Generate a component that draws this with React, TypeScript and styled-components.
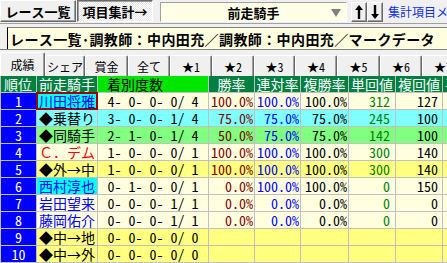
import React from "react";
import styled, { createGlobalStyle } from "styled-components";

const FONT = `"Noto Sans Mono CJK JP", "Noto Sans CJK JP", monospace`;

const GlobalStyle = createGlobalStyle`
  html, body { margin: 0; padding: 0; background: #f0f0f0; overflow: hidden; }
  body { font-family: ${FONT}; }
`;

const Window = styled.div`
  width: 447px;
  height: 263px;
  overflow: hidden;
  display: flex;
  flex-direction: column;
  background: #f0f0f0;
  font-family: ${FONT};
  color: #000;
`;

const Toolbar = styled.div`
  display: flex;
  align-items: flex-start;
  height: 23px;
  border-bottom: 1px solid #a0a0a0;
  white-space: nowrap;
`;

const ToolButton = styled.div<{ $pressed?: boolean }>`
  box-sizing: border-box;
  flex: none;
  width: 76px;
  height: 22px;
  margin-right: 1px;
  display: flex;
  align-items: center;
  justify-content: center;
  font-weight: bold;
  font-size: 13px;
  background: ${(p) =>
    p.$pressed
      ? "repeating-conic-gradient(#ffffff 0 25%, #e6e6e6 0 50%) 0 0 / 2px 2px"
      : "#f0f0f0"};
  border: 1px solid;
  border-color: ${(p) =>
    p.$pressed ? "#696969 #ffffff #ffffff #696969" : "#ffffff #696969 #696969 #ffffff"};
  box-shadow: ${(p) =>
    p.$pressed ? "inset 1px 1px 0 #a0a0a0" : "inset -1px -1px 0 #a0a0a0"};
`;

const Select = styled.div`
  box-sizing: border-box;
  flex: none;
  margin: 2px 0 0 6px;
  width: 187px;
  height: 20px;
  padding-left: 20px;
  display: grid;
  grid-template-columns: 1fr 20px;
  align-items: center;
  background: #ffffe8;
  border: 1px solid;
  border-color: #a0a0a0 #ffffff #ffffff #a0a0a0;
  font-weight: bold;
  font-size: 13px;
`;

const SelectText = styled.span`
  text-align: center;
`;

const SelectArrow = styled.span`
  justify-self: center;
  width: 0;
  height: 0;
  border-left: 5px solid transparent;
  border-right: 5px solid transparent;
  border-top: 8px solid #808080;
`;

const ArrowButton = styled.div<{ $first?: boolean }>`
  box-sizing: border-box;
  flex: none;
  width: 16px;
  height: 20px;
  margin: 2px 0 0 ${(p) => (p.$first ? 4 : 0)}px;
  display: flex;
  align-items: center;
  justify-content: center;
  border: 1px solid;
  border-color: #ffffff #696969 #696969 #ffffff;
  box-shadow: inset -1px -1px 0 #a0a0a0;
  background: #f0f0f0;
`;

const ArrowGlyph = styled.svg`
  display: block;
`;

const LinkText = styled.span`
  margin: 4px 0 0 5px;
  font-size: 12px;
  line-height: 16px;
  color: #1030e0;
`;

const TitleRow = styled.div`
  padding: 3px 0 0 7px;
  border-bottom: 1px solid #808080;
`;

const TitleBox = styled.div`
  box-sizing: border-box;
  height: 22px;
  padding-left: 2px;
  display: flex;
  align-items: center;
  background: #ffffe0;
  border-top: 1px solid #808080;
  border-left: 1px solid #000;
  font-weight: bold;
  font-size: 14px;
  letter-spacing: 0.4px;
  white-space: nowrap;
  overflow: hidden;
`;

const TabStrip = styled.div`
  display: flex;
  align-items: flex-end;
  height: 26px;
  white-space: nowrap;
`;

const Tab = styled.div<{ $active?: boolean; $w: number }>`
  box-sizing: border-box;
  flex: none;
  width: ${(p) => p.$w}px;
  height: ${(p) => (p.$active ? 24 : 21)}px;
  display: flex;
  align-items: center;
  justify-content: center;
  font-size: 12px;
  background: #f0f0f0;
  border-left: 1px solid #ffffff;
  border-top: 1px solid #ffffff;
  border-right: 1px solid #696969;
  border-radius: 2px 2px 0 0;
  box-shadow: inset -1px 0 0 #a0a0a0;
`;

const Grid = styled.div`
  display: grid;
  grid-template-columns: 35px 60px 110px 45px 45px 47px 46px 46px 80px;
  grid-auto-rows: 16px;
  gap: 1px;
  width: max-content;
  padding: 0 0 1px 1px;
  background: #c0c0c0;
  font-size: 14px;
  line-height: 16px;
`;

type Align = "left" | "center" | "right";

const Cell = styled.div<{
  $bg: string;
  $color?: string;
  $align?: Align;
  $pl?: number;
  $pr?: number;
  $selected?: boolean;
}>`
  background: ${(p) => p.$bg};
  color: ${(p) => p.$color ?? "#000"};
  text-align: ${(p) => p.$align ?? "left"};
  padding-left: ${(p) => p.$pl ?? 0}px;
  padding-right: ${(p) => p.$pr ?? 0}px;
  white-space: pre;
  overflow: hidden;
  box-shadow: ${(p) => (p.$selected ? "0 0 0 1px #a00000, inset 0 0 0 1px #a00000" : "none")};
  position: relative;
  z-index: ${(p) => (p.$selected ? 1 : 0)};
`;

const HEAD_BG = "#008040";
const SORT_BG = "#00e600";

const headers: { label: string; bg: string; color: string; align: Align; pl?: number }[] = [
  { label: "順位", bg: HEAD_BG, color: "#fff", align: "left", pl: 3 },
  { label: "前走騎手", bg: HEAD_BG, color: "#fff", align: "left", pl: 2 },
  { label: "着別度数", bg: SORT_BG, color: "#000", align: "left", pl: 9 },
  { label: "勝率", bg: HEAD_BG, color: "#fff", align: "center" },
  { label: "連対率", bg: HEAD_BG, color: "#fff", align: "center" },
  { label: "複勝率", bg: HEAD_BG, color: "#fff", align: "center" },
  { label: "単回値", bg: HEAD_BG, color: "#fff", align: "center" },
  { label: "複回値", bg: HEAD_BG, color: "#fff", align: "center" },
  { label: "平均人気", bg: HEAD_BG, color: "#fff", align: "left", pl: 2 },
];

type Row = {
  name: string;
  nameColor: string;
  nameBg?: string;
  selected?: boolean;
  rec: string;
  bg: string;
  vals?: [string, string, string, string, string];
};

const LY = "#ffffe0";
const YE = "#ffff80";

const rows: Row[] = [
  { name: "川田将雅", nameColor: "#0000ff", nameBg: "#00ffff", selected: true, rec: "4- 0- 0- 0/ 4", bg: LY, vals: ["100.0%", "100.0%", "100.0%", "312", "127"] },
  { name: "◆乗替り", nameColor: "#000", rec: "3- 0- 0- 1/ 4", bg: "#80ffff", vals: ["75.0%", "75.0%", "75.0%", "245", "100"] },
  { name: "◆同騎手", nameColor: "#000", rec: "2- 1- 0- 1/ 4", bg: "#80ff80", vals: ["50.0%", "75.0%", "75.0%", "142", "100"] },
  { name: "Ｃ．デム", nameColor: "#ff0000", rec: "1- 0- 0- 0/ 1", bg: LY, vals: ["100.0%", "100.0%", "100.0%", "300", "140"] },
  { name: "◆外→中", nameColor: "#000", rec: "1- 0- 0- 0/ 1", bg: YE, vals: ["100.0%", "100.0%", "100.0%", "300", "140"] },
  { name: "西村淳也", nameColor: "#0000ff", nameBg: "#00ffff", rec: "0- 1- 0- 0/ 1", bg: LY, vals: ["0.0%", "100.0%", "100.0%", "0", "150"] },
  { name: "岩田望来", nameColor: "#0000ff", rec: "0- 0- 0- 1/ 1", bg: LY, vals: ["0.0%", "0.0%", "0.0%", "0", "0"] },
  { name: "藤岡佑介", nameColor: "#0000ff", rec: "0- 0- 0- 1/ 1", bg: LY, vals: ["0.0%", "0.0%", "0.0%", "0", "0"] },
  { name: "◆中→地", nameColor: "#000", rec: "0- 0- 0- 0/ 0", bg: YE },
  { name: "◆中→外", nameColor: "#000", rec: "0- 0- 0- 0/ 0", bg: YE },
];

const valueColors = ["#800000", "#0000ff", "#000", "#008000", "#000"];
const valuePad = [1, 1, 1, 5, 4];

const tabs = ["成績", "シェア", "賞金", "全て", "★1", "★2", "★3", "★4", "★5", "★6", "★7"];
const tabWidths = [45, 40, 43, 42, 42, 42, 41, 42, 43, 42, 42];

function Arrow({ down }: { down?: boolean }) {
  return (
    <ArrowGlyph width="8" height="14" viewBox="0 0 8 14" aria-hidden>
      <g transform={down ? "rotate(180 4 7)" : undefined} fill="#000">
        <rect x="2.8" y="3" width="2.4" height="11" />
        <path d="M4 0 L8 5 L0 5 Z" />
      </g>
    </ArrowGlyph>
  );
}

export default function App() {
  return (
    <Window>
      <GlobalStyle />
      <Toolbar>
        <ToolButton>レース一覧</ToolButton>
        <ToolButton $pressed>項目集計→</ToolButton>
        <Select>
          <SelectText>前走騎手</SelectText>
          <SelectArrow />
        </Select>
        <ArrowButton $first>
          <Arrow />
        </ArrowButton>
        <ArrowButton>
          <Arrow down />
        </ArrowButton>
        <LinkText>集計項目メニュー</LinkText>
      </Toolbar>
      <TitleRow>
        <TitleBox>レース一覧･調教師：中内田充／調教師：中内田充／マークデータ</TitleBox>
      </TitleRow>
      <TabStrip>
        {tabs.map((t, i) => (
          <Tab key={t} $active={i === 0} $w={tabWidths[i]}>
            {t}
          </Tab>
        ))}
      </TabStrip>
      <Grid>
        {headers.map((h) => (
          <Cell key={h.label} $bg={h.bg} $color={h.color} $align={h.align} $pl={h.pl}>
            {h.label}
          </Cell>
        ))}
        {rows.map((r, i) => (
          <React.Fragment key={r.name}>
            <Cell $bg="#0000ff" $color="#fff" $align="center">
              {i + 1}
            </Cell>
            <Cell $bg={r.nameBg ?? r.bg} $color={r.nameColor} $pl={2} $selected={r.selected}>
              {r.name}
            </Cell>
            <Cell $bg={r.bg} $align="center">
              {r.rec}
            </Cell>
            {[0, 1, 2, 3, 4].map((k) => (
              <Cell key={k} $bg={r.bg} $color={valueColors[k]} $align="right" $pr={valuePad[k]}>
                {r.vals ? r.vals[k] : ""}
              </Cell>
            ))}
            <Cell $bg={r.bg} />
          </React.Fragment>
        ))}
      </Grid>
    </Window>
  );
}
